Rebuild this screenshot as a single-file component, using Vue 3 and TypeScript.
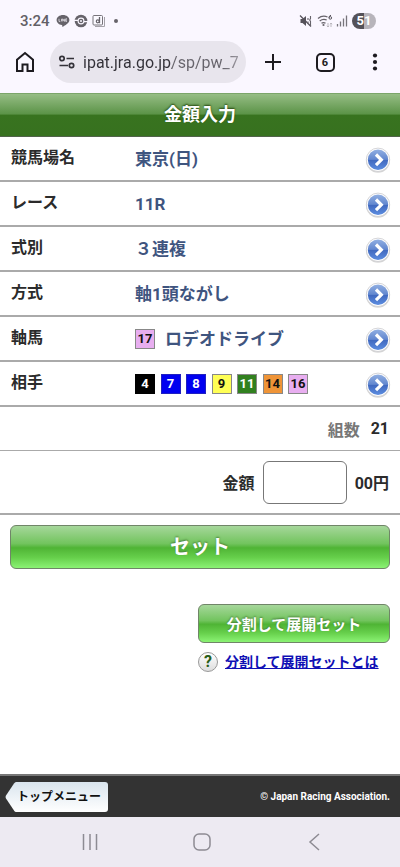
<script setup lang="ts">
import { ref } from 'vue'

interface Horse {
  no: number
  color: string
}

interface Row {
  label: string
  value?: string
  horses?: Horse[]
}

const rows: Row[] = [
  { label: '競馬場名', value: '東京(日)' },
  { label: 'レース', value: '11R' },
  { label: '式別', value: '３連複' },
  { label: '方式', value: '軸1頭ながし' },
  { label: '軸馬', value: 'ロデオドライブ', horses: [{ no: 17, color: 'pink' }] },
  {
    label: '相手',
    horses: [
      { no: 4, color: 'black' },
      { no: 7, color: 'blue' },
      { no: 8, color: 'blue' },
      { no: 9, color: 'yellow' },
      { no: 11, color: 'turf' },
      { no: 14, color: 'orange' },
      { no: 16, color: 'pink' },
    ],
  },
]

const url = ref('ipat.jra.go.jp/sp/pw_7')
const amount = ref('')
</script>

<template>
  <div class="screen">
    <header class="browser">
      <div class="status">
        <span class="clock">3:24</span>
        <svg class="s-icon" width="14" height="14" viewBox="0 0 14 14" aria-hidden="true">
          <path d="M7 1C3.400 1 .6 3.200.6 6.100c0 2.500 2.200 4.600 5.200 5 .5.100.5.500.4 1-.1.600.1.900.7.600C8.800 11.700 13.400 9.200 13.400 6.100 13.400 3.200 10.600 1 7 1z" fill="#66636a" />
          <path d="M3 4.800v2.600h1.300M5.500 4.800v2.600M6.700 7.400V4.800l1.700 2.600V4.800M11 4.800H9.700v2.600H11M9.700 6.100H11" fill="none" stroke="#f6f3fb" stroke-width=".7" />
        </svg>
        <svg class="s-icon" width="14" height="14" viewBox="0 0 14 14" aria-hidden="true">
          <circle cx="7" cy="7" r="6.300" fill="#66636a" />
          <path d="M0 6.300 4 6.300M10 7.700h4" stroke="#f9f6fe" stroke-width="1.300" />
          <circle cx="7" cy="7" r="2.900" fill="none" stroke="#f9f6fe" stroke-width="1.100" />
          <circle cx="7" cy="7" r="1" fill="#f9f6fe" />
        </svg>
        <svg class="s-icon" width="14" height="14" viewBox="0 0 14 14" aria-hidden="true">
          <path d="M3 12.500h9.500V3" fill="none" stroke="#a5a2a9" />
          <rect x="1" y="1.500" width="9.500" height="9.500" rx="1" fill="#fbf9ff" stroke="#77747b" />
          <path d="M7.500 3v6.200" stroke="#66636a" stroke-width="1.300" />
          <circle cx="5.800" cy="7.300" r="1.500" fill="none" stroke="#66636a" stroke-width="1.200" />
        </svg>
        <span class="dot"></span>
        <span class="spacer"></span>
        <svg width="14" height="14" viewBox="0 0 14 14" aria-hidden="true">
          <path d="M1.500 5h2L7 2v10L3.500 9h-2z" fill="#55525a" />
          <path d="M1 1.500 12 12.500" stroke="#55525a" stroke-width="1.300" />
          <path d="M9 4v2M9 7.500V10M11.500 2v2.500L10.700 6l.8 1.500V12" fill="none" stroke="#66636a" stroke-width="1.100" />
        </svg>
        <svg class="wifi" width="16" height="14" viewBox="0 0 16 14" aria-hidden="true">
          <path d="M1 4.500Q5.500.8 10.500 3M2.700 7q3.300-2.600 7-1M4.500 9.300q2-1.500 4 0" fill="none" stroke="#66636a" stroke-width="1.300" />
          <circle cx="6.500" cy="11" r="1.100" fill="#66636a" />
          <path d="M14 1.200q-2 .5-2 2.500" fill="none" stroke="#55525a" />
          <circle cx="13.300" cy="3.900" r="1.300" fill="none" stroke="#55525a" />
          <path d="M11 9v4M9.800 11.800 11 13l1-1.200M14 13V9M13 10.200 14 9l1.200 1.200" fill="none" stroke="#b4b1b8" stroke-width=".9" />
        </svg>
        <svg width="12" height="14" viewBox="0 0 12 14" aria-hidden="true">
          <path d="M1.500 10v2.500M4.500 7.500v5M7.500 4.500v8M10.500 1.500v11" stroke="#77747b" stroke-width="1.300" />
        </svg>
        <span class="battery">51</span>
      </div>
      <div class="toolbar">
        <button class="tool" type="button" aria-label="ホーム">
          <svg width="20" height="22" viewBox="0 0 20 22"><path d="M2 20V8.700L10 2l8 6.700V20h-5.500v-6.500h-5V20z" fill="none" stroke="#1d1b20" stroke-width="2" /></svg>
        </button>
        <div class="address">
          <svg width="18" height="14" viewBox="0 0 18 14" aria-hidden="true">
            <g fill="none" stroke="#333138" stroke-width="1.700">
              <circle cx="4" cy="3.500" r="2.200" /><path d="M8.500 3.500H16M1.500 10.500H10" /><circle cx="13.500" cy="10.500" r="2.200" />
            </g>
          </svg>
          <input v-model="url" class="url" type="text" aria-label="アドレス">
        </div>
        <button class="tool new-tab" type="button" aria-label="新しいタブ">
          <svg width="20" height="20" viewBox="0 0 20 20"><path d="M10 2v16M2 10h16" stroke="#1d1b20" stroke-width="2" /></svg>
        </button>
        <button class="tool" type="button" aria-label="タブ一覧"><span class="tab-count">6</span></button>
        <button class="tool" type="button" aria-label="メニュー">
          <svg width="6" height="20" viewBox="0 0 6 20" fill="#1d1b20"><circle cx="3" cy="3.500" r="2.100" /><circle cx="3" cy="10" r="2.100" /><circle cx="3" cy="16.500" r="2.100" /></svg>
        </button>
      </div>
    </header>

    <main>
      <h1>金額入力</h1>
      <button v-for="row in rows" :key="row.label" class="row" type="button">
        <span class="label">{{ row.label }}</span>
        <span class="value">
          <span v-if="row.horses" class="horses" :class="{ many: row.horses.length > 1 }">
            <span v-for="h in row.horses" :key="h.no" class="horse" :class="h.color">{{ h.no }}</span>
          </span>
          <span v-if="row.value">{{ row.value }}</span>
        </span>
        <svg class="go" width="26" height="26" viewBox="0 0 26 26" aria-hidden="true">
          <defs>
            <linearGradient id="goFill" x1="0" y1="0" x2="0" y2="1">
              <stop offset="0" stop-color="#91afe2" /><stop offset=".48" stop-color="#6287cf" />
              <stop offset=".52" stop-color="#4169bf" /><stop offset="1" stop-color="#5c8de0" />
            </linearGradient>
          </defs>
          <circle cx="13" cy="13.800" r="12" fill="#bdbdbd" opacity=".6" />
          <circle cx="13" cy="12.800" r="11.700" fill="#fff" stroke="#c9c9cd" stroke-width=".8" />
          <circle cx="13" cy="12.800" r="10.200" fill="url(#goFill)" />
          <path d="m11 7.500 5.300 5.300-5.300 5.300" fill="none" stroke="#fff" stroke-width="3.200" />
        </svg>
      </button>
      <div class="count"><span class="count-label">組数</span><span>21</span></div>
      <form class="amount" @submit.prevent>
        <label for="amount">金額</label>
        <input id="amount" v-model="amount" type="text" inputmode="numeric">
        <span>00円</span>
      </form>
      <div class="actions">
        <button class="green set" type="button">セット</button>
        <button class="green split" type="button">分割して展開セット</button>
        <div class="help">
          <span class="question" aria-hidden="true">?</span>
          <a href="#help">分割して展開セットとは</a>
        </div>
      </div>
    </main>

    <footer>
      <a class="top-menu" href="#top">
        <svg width="12" height="30" viewBox="0 0 12 30" aria-hidden="true">
          <defs><linearGradient id="tip" x1="0" y1="0" x2="0" y2="1"><stop offset="0" stop-color="#dae5ee" /><stop offset="1" stop-color="#fff" /></linearGradient></defs>
          <path d="M12 0h-1Q10 0 9 1.500L1 13.500Q0 15 1 16.500l8 12Q10 30 11 30h1z" fill="url(#tip)" />
        </svg>
        <span>トップメニュー</span>
      </a>
      <small>© Japan Racing Association.</small>
    </footer>
    <nav class="system" aria-label="システム">
      <button type="button" aria-label="履歴"><svg width="20" height="20" viewBox="0 0 20 20"><path d="M3.500 2v16M10 2v16M16.500 2v16" stroke="#8d8b93" stroke-width="1.500" /></svg></button>
      <button type="button" aria-label="ホーム画面"><svg width="20" height="20" viewBox="0 0 20 20"><rect x="2" y="2" width="16" height="16" rx="5" fill="none" stroke="#8d8b93" stroke-width="1.500" /></svg></button>
      <button type="button" aria-label="戻る"><svg width="20" height="20" viewBox="0 0 20 20"><path d="M15 2 6 10l9 8" fill="none" stroke="#8d8b93" stroke-width="1.500" /></svg></button>
    </nav>
  </div>
</template>

<style>
body {
  margin: 0;
  background: #fff;
}
</style>

<style scoped>
.screen {
  min-height: 100vh;
  display: flex;
  flex-direction: column;
  font-family: Roboto, "Noto Sans CJK JP", sans-serif;
  font-size: 16px;
  font-weight: 700;
  color: #2b2b2b;
}

button,
input {
  font: inherit;
  color: inherit;
  box-sizing: border-box;
  margin: 0;
}

button {
  cursor: pointer;
}

svg {
  display: block;
  flex: none;
}

.browser {
  background: #faf7ff;
}

.status {
  display: flex;
  align-items: center;
  height: 41px;
  padding: 0 24px 0 20px;
  box-sizing: border-box;
}

.clock {
  font-size: 15px;
  font-weight: 500;
  color: #626066;
  margin-right: 6px;
}

.s-icon {
  margin-right: 4px;
}

.dot {
  width: 4px;
  height: 4px;
  margin-left: 4px;
  border-radius: 50%;
  background: #66636a;
}

.spacer {
  flex: 1;
}

.wifi {
  margin: 0 3px 0 4px;
}

.battery {
  width: 24px;
  margin-left: 4px;
  border-radius: 8px;
  background: linear-gradient(90deg, #555259 50%, #b7b4bb 50%);
  color: #fff;
  font-size: 13px;
  line-height: 16px;
  text-align: center;
}

.toolbar {
  display: flex;
  align-items: center;
  height: 52px;
  padding-bottom: 10px;
  box-sizing: border-box;
}

.tool {
  display: flex;
  align-items: center;
  justify-content: center;
  width: 50px;
  height: 42px;
  padding: 0;
  border: 0;
  background: none;
}

.new-tab {
  width: 54px;
}

.tab-count {
  width: 19px;
  height: 19px;
  box-sizing: border-box;
  border: 2px solid #1d1b20;
  border-radius: 5px;
  font-size: 11px;
  line-height: 15px;
  color: #1d1b20;
}

.address {
  flex: 1;
  min-width: 0;
  height: 42px;
  display: flex;
  align-items: center;
  gap: 7px;
  padding: 0 8px;
  box-sizing: border-box;
  border-radius: 21px;
  background: #e8e5ed;
}

.url {
  flex: 1;
  min-width: 0;
  padding: 0;
  border: 0;
  outline: 0;
  font-size: 16px;
  font-weight: 400;
  background: linear-gradient(90deg, #333138 89px, #66636b 89px, #66636b 90%, #99969e);
  background-clip: text;
  color: transparent;
}

main {
  flex: 1;
}

h1 {
  margin: 0;
  height: 44px;
  box-sizing: border-box;
  border-top: 1px solid #7ba56a;
  border-bottom: 1px solid #51634a;
  background: linear-gradient(#96bd85, #5b9347 48%, #38731f 50%, #37711f);
  color: #fff;
  font-size: 18px;
  line-height: 41px;
  text-align: center;
  text-shadow: 0 -1px 2px #24480f;
}

.row {
  display: grid;
  grid-template-columns: 124px 1fr 26px;
  align-items: center;
  width: 100%;
  height: 45px;
  padding: 0 9px 0 11px;
  border: 0;
  border-bottom: 2px solid #aaa;
  background: #fff;
  text-align: left;
}

.label {
  line-height: 24px;
  padding-bottom: 2px;
}

.value {
  display: flex;
  align-items: center;
  gap: 10px;
  color: #3f557f;
  font-size: 17px;
  line-height: 24px;
}

.horses {
  display: flex;
  justify-content: space-between;
}

.horses.many {
  width: 173px;
}

.horse {
  width: 20px;
  height: 20px;
  box-sizing: border-box;
  border: 1px solid #888;
  font-size: 13px;
  line-height: 18px;
  text-align: center;
  color: #111;
}

.pink { background: #e8aef0; }
.black { background: #000; border-color: #000; color: #fff; }
.blue { background: #0000f0; border-color: #2020c0; color: #fff; }
.yellow { background: #ffff55; }
.turf { background: #31801f; color: #fff; }
.orange { background: #ef9437; }

.go {
  margin-top: 2px;
}

.count {
  display: flex;
  align-items: center;
  justify-content: flex-end;
  gap: 11px;
  height: 44px;
  padding: 0 11px;
  box-sizing: border-box;
  border-bottom: 1px solid #aaa;
}

.count-label {
  color: #777;
}

.amount {
  display: flex;
  align-items: center;
  justify-content: flex-end;
  gap: 8px;
  height: 64px;
  padding: 0 11px;
  box-sizing: border-box;
  border-bottom: 2px solid #aaa;
}

.amount input {
  width: 84px;
  height: 43px;
  padding: 0 8px;
  border: 1px solid #777;
  border-radius: 6px;
  background: #fff;
}

.actions {
  display: flex;
  flex-direction: column;
  align-items: flex-end;
  padding: 10px;
}

.green {
  padding: 0;
  border: 1px solid #708568;
  border-radius: 6px;
  background: linear-gradient(#a6d79b, #72c45e 42%, #4fb435 52%, #66cf4b 75%, #8bf374);
  color: #fff;
  text-shadow: 0 -1px 2px #4a8139;
}

.set {
  width: 100%;
  height: 44px;
  font-size: 20px;
  line-height: 38px;
}

.split {
  width: 192px;
  height: 39px;
  margin-top: 35px;
  font-size: 15px;
}

.help {
  display: flex;
  align-items: center;
  gap: 7px;
  width: 192px;
  margin-top: 7px;
  font-size: 14px;
  line-height: 24px;
  white-space: nowrap;
}

.help a {
  color: #1010b5;
}

.question {
  width: 20px;
  height: 20px;
  box-sizing: border-box;
  border: 1px solid #999;
  border-radius: 50%;
  background: linear-gradient(#fff, #ddd);
  color: #285e18;
  font-size: 16px;
  line-height: 18px;
  text-align: center;
}

footer {
  display: flex;
  align-items: center;
  justify-content: space-between;
  height: 43px;
  padding: 0 10px 0 5px;
  box-sizing: border-box;
  border-top: 2px solid #777;
  background: #333;
}

.top-menu {
  display: flex;
  color: #111;
  font-size: 12px;
  line-height: 30px;
  text-decoration: none;
}

.top-menu span {
  padding-right: 7px;
  border-radius: 0 3px 3px 0;
  background: linear-gradient(#dae5ee, #fff);
}

footer small {
  color: #fff;
  font-size: 10px;
}

.system {
  display: flex;
  justify-content: space-between;
  height: 50px;
  padding: 0 76px 0 80px;
  background: #edeaf2;
}

.system button {
  padding: 0;
  border: 0;
  background: none;
}
</style>
